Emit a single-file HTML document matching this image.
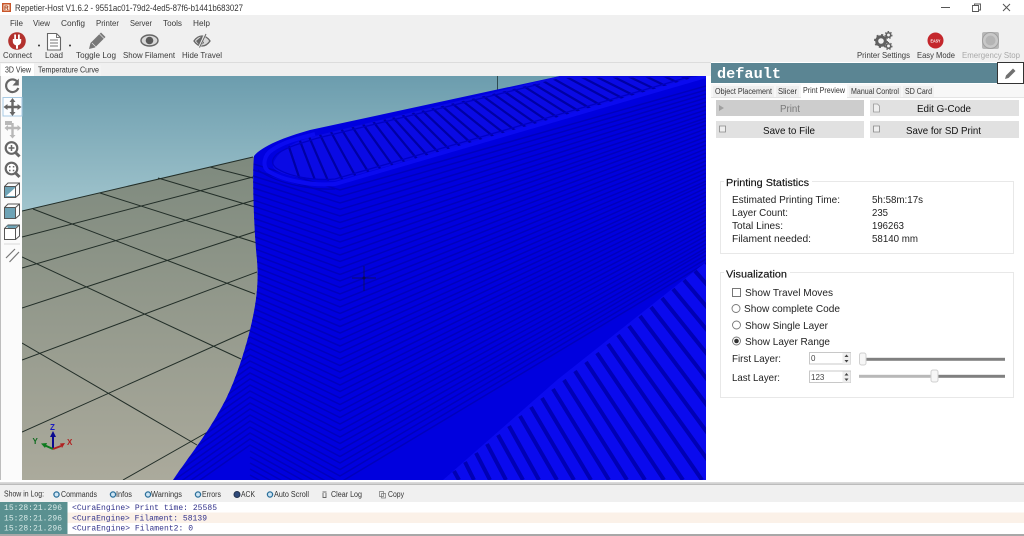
<!DOCTYPE html>
<html><head><meta charset="utf-8"><title>Repetier-Host</title>
<style>
html,body{margin:0;padding:0;background:#f0f0f0;width:1024px;height:536px;overflow:hidden}
svg{display:block;filter:blur(.3px)}
text{font-family:"Liberation Sans",sans-serif;font-size:9px;fill:#333;white-space:pre}
.t{font-size:8.3px;fill:#3a3a3a}
.s{font-size:10.5px;fill:#222}
.l{font-size:8px;fill:#333}
.m{font-family:"Liberation Mono",monospace;font-size:8px}
.b{font-size:10.5px;fill:#111}
</style></head><body>
<svg width="1024" height="536" viewBox="0 0 1024 536" xmlns="http://www.w3.org/2000/svg">
<defs>
<linearGradient id="sky" x1="0" y1="0" x2="0" y2="1"><stop offset="0" stop-color="#6c9dae"/><stop offset="1" stop-color="#a3c6ce"/></linearGradient>
<linearGradient id="floor" x1="0" y1="0" x2="0" y2="1"><stop offset="0" stop-color="#7d897d"/><stop offset="1" stop-color="#abaa9c"/></linearGradient>
<clipPath id="view"><rect x="22" y="76" width="684" height="404"/></clipPath>
<clipPath id="body"><path d="M706 76L560 76L310 130C285 137 262 146 254 156C252 175 254 230 257 260C259 285 256 305 250 330C243 358 232 390 220 410C205 437 190 455 173 480L706 480Z"/></clipPath>
<clipPath id="bot"><path d="M443 480L557 380L706 262L706 480Z"/></clipPath>
<clipPath id="cav"><path d="M706 77L560 78L315 136C292 142 276 152 273 165C272 171 285 175 300 178L335 181Z"/></clipPath>
</defs>

<rect width="1024" height="536" fill="#f0f0f0"/>
<!-- title bar -->
<rect width="1024" height="15" fill="#fff"/>
<rect x="2" y="3" width="9" height="9" fill="#c8552a"/><rect x="3.5" y="4.5" width="6" height="6" fill="#fbe9d8"/><text x="4" y="10" style="font-size:6.5px;font-weight:bold;fill:#a53a16">R</text>
<text x="15" y="11" textLength="228" lengthAdjust="spacingAndGlyphs" style="font-size:8.8px">Repetier-Host V1.6.2 - 9551ac01-79d2-4ed5-87f6-b1441b683027</text>
<path d="M941 7.5h9" stroke="#555" fill="none"/>
<path d="M972.5 5.5h6v6h-6zM974.5 5.5v-1.5h6v6h-2" stroke="#555" fill="none" stroke-width=".9"/>
<path d="M1003 4l7 7M1010 4l-7 7" stroke="#555" fill="none"/>

<!-- menu -->
<text x="10" y="26" class="t" textLength="13" lengthAdjust="spacingAndGlyphs">File</text>
<text x="33" y="26" class="t" textLength="17" lengthAdjust="spacingAndGlyphs">View</text>
<text x="61" y="26" class="t" textLength="24" lengthAdjust="spacingAndGlyphs">Config</text>
<text x="96" y="26" class="t" textLength="23" lengthAdjust="spacingAndGlyphs">Printer</text>
<text x="130" y="26" class="t" textLength="22" lengthAdjust="spacingAndGlyphs">Server</text>
<text x="163" y="26" class="t" textLength="19" lengthAdjust="spacingAndGlyphs">Tools</text>
<text x="193" y="26" class="t" textLength="17" lengthAdjust="spacingAndGlyphs">Help</text>

<!-- toolbar icons -->
<circle cx="17" cy="41" r="8.8" fill="#b3322e"/>
<path d="M14.2 34.5h1.8v4.5h-1.8zM18 34.5h1.8v4.5H18zM12.8 39h8.4v2.3c0 2.4-1.7 3.7-3.2 4.1v3.4h-2v-3.4c-1.5-.4-3.2-1.7-3.2-4.1z" fill="#fff"/>
<circle cx="39" cy="45.5" r="1" fill="#333"/>
<path d="M47.5 33.5h9l4 4v12.5h-13z" fill="#fdfdfd" stroke="#666" stroke-width="1.1"/>
<path d="M56.5 33.5v4h4M50 40h8M50 43h8M50 46h8" stroke="#777" fill="none"/>
<circle cx="70" cy="45.5" r="1" fill="#333"/>
<path d="M89 49l1.5-6 10.5-10.5 4.5 4.5-10.5 10.5z" fill="#787878"/>
<path d="M92 43l4.5 4.5M99.5 34l4.5 4.5" stroke="#eee" stroke-width=".6"/>
<ellipse cx="149.500" cy="40.500" rx="8.500" ry="5.500" fill="#d8d8d8" stroke="#666" stroke-width="1.400"/>
<circle cx="149.500" cy="40.500" r="3.800" fill="#5a5a5a"/>
<path d="M194 41c2-3 5-5 8-5s6 2 8 5c-2 3-5 5-8 5s-6-2-8-5z" fill="#d8d8d8" stroke="#666" stroke-width="1.300"/>
<path d="M196 41l6-5 2 7-4 3z" fill="#666"/>
<path d="M206 33l-7 15" stroke="#f0f0f0" stroke-width="2.400"/>
<path d="M206 34l-6.500 13.500" stroke="#666" stroke-width="1"/>
<text x="3" y="58" class="t" textLength="29" lengthAdjust="spacingAndGlyphs">Connect</text>
<text x="45" y="58" class="t" textLength="18" lengthAdjust="spacingAndGlyphs">Load</text>
<text x="76" y="58" class="t" textLength="40" lengthAdjust="spacingAndGlyphs">Toggle Log</text>
<text x="123" y="58" class="t" textLength="52" lengthAdjust="spacingAndGlyphs">Show Filament</text>
<text x="182" y="58" class="t" textLength="40" lengthAdjust="spacingAndGlyphs">Hide Travel</text>

<!-- right toolbar -->
<circle cx="881" cy="41" r="4.300" fill="none" stroke="#606060" stroke-width="3"/>
<circle cx="881" cy="41" r="6" fill="none" stroke="#606060" stroke-width="2" stroke-dasharray="2 2.700"/>
<circle cx="888.500" cy="35" r="2.200" fill="none" stroke="#606060" stroke-width="1.500"/>
<circle cx="888.500" cy="35" r="3.400" fill="none" stroke="#606060" stroke-width="1.200" stroke-dasharray="1.500 1.500"/>
<circle cx="888.500" cy="46" r="2.200" fill="none" stroke="#606060" stroke-width="1.500"/>
<circle cx="888.500" cy="46" r="3.400" fill="none" stroke="#606060" stroke-width="1.200" stroke-dasharray="1.500 1.500"/>
<circle cx="935.500" cy="40.500" r="8" fill="#c4272c"/>
<text x="930.500" y="42.500" textLength="10" lengthAdjust="spacingAndGlyphs" style="font-size:4.500px;font-weight:bold;fill:#fff">EASY</text>
<rect x="982" y="32" width="17" height="17" rx="2" fill="#b8b8b8"/>
<circle cx="990.500" cy="40.500" r="8" fill="#c8c8c8" stroke="#a0a0a0"/>
<circle cx="990.500" cy="40.500" r="5" fill="#b4b4b4"/>
<text x="857" y="58" class="t" textLength="53" lengthAdjust="spacingAndGlyphs">Printer Settings</text>
<text x="917" y="58" class="t" textLength="38" lengthAdjust="spacingAndGlyphs">Easy Mode</text>
<text x="962" y="58" class="t" textLength="58" lengthAdjust="spacingAndGlyphs" style="fill:#a8a8a8">Emergency Stop</text>

<!-- left tabs -->
<rect x="0" y="62" width="711" height="1" fill="#dcdcdc"/>
<rect x="0" y="76" width="711" height="407" fill="#fff"/>
<rect x="1" y="63.500" width="33" height="13" fill="#fff"/>
<rect x="35" y="65" width="66" height="11" fill="#f3f3f3"/>
<text x="5" y="72.500" class="l" textLength="26" lengthAdjust="spacingAndGlyphs">3D View</text>
<text x="38" y="72.500" class="l" textLength="61" lengthAdjust="spacingAndGlyphs">Temperature Curve</text>

<!-- 3D view -->
<g clip-path="url(#view)">
<rect x="22" y="76" width="684" height="140" fill="url(#sky)"/>
<path d="M22 211L253 157L300 150V480H22Z" fill="url(#floor)"/>
<path d="M22 211L253 157M22 237L253 177M22 268L255 200M22 308L257 231M22 360L257 272M22 432L250 330M123 480L250 408M33 209L255 294M100 193L257 243M158 178L255 207M210 167L253 178M22 257L241 359M22 343L197 445" stroke="#222e28" stroke-width="1" fill="none"/>
<path d="M497.500 76V92" stroke="#2d4a50" stroke-width="1"/>
<g clip-path="url(#body)">
<rect x="170" y="76" width="540" height="410" fill="#0000de"/>
<path fill="none" stroke="#0000bc" stroke-width="1.500" d="M706 86L340 190L250 163M706 90L340 196.500L250 169M706 94L340 203L250 175M706 98L340 209.500L250 181M706 102L340 216L250 187M706 106L340 222.500L250 193M706 110L340 229L250 199M706 114L340 235.500L250 205M706 118L340 242L250 211M706 121L340 248.500L250 217M706 125L340 255L250 223M706 129L340 261.500L250 229M706 133L340 268L250 235M706 137L340 274.500L250 241M706 141L340 281L250 247M706 145L340 287.500L250 253M706 149L340 294L250 259M706 153L340 300.500L250 265L170 321M706 157L340 307L250 271L170 327M706 161L340 313.500L250 277L170 333M706 165L340 320L250 283L170 339M706 169L340 326.500L250 289L170 345M706 173L340 333L250 295L170 351M706 177L340 339.500L250 301L170 357M706 181L340 346L250 307L170 363M706 184L340 352.500L250 313L170 369M706 188L340 359L250 319L170 375M706 192L340 365.500L250 325L170 381M706 196L340 372L250 331L170 387M706 200L340 378.500L250 337L170 393M706 204L340 385L250 343L170 399M706 208L340 391.500L250 349L170 405M706 212L340 398L250 355L170 411M706 216L340 404.500L250 361L170 417M706 220L340 411L250 367L170 423M706 224L340 417.500L250 373L170 429M706 228L340 424L250 379L170 435M706 232L340 430.500L250 385L170 441M706 236L340 437L250 391L170 447M706 240L340 443.500L250 397L170 453M706 244L340 450L250 403L170 459M706 248L340 456.500L250 409L170 465M706 251L340 463L250 415L170 471M706 255L340 469.500L250 421L170 477M706 259L340 476L250 427L170 483M706 263L340 482.500L250 433L170 489M340 489L250 439L170 495M340 495L250 445L170 501M340 501L250 451M340 507L250 457M340 513L250 463M340 519L250 469M340 525L250 475M340 531L250 481"/>
<g clip-path="url(#bot)">
<rect x="440" y="260" width="270" height="222" fill="#0a0aee"/>
<path fill="none" stroke="#0000b4" stroke-width="4" d="M454 471L459 480M465 462L474 480M476 453L490 480M487 444L506 480M498 435L523 480M509 426L539 480M520 416L557 480M531 407L574 480M542 398L591 480M553 389L609 480M564 380L627 480M575 371L645 480M586 362L664 480M597 353L683 480M608 344L702 480M618 335L722 480M629 326L742 480M640 316L763 480M651 307L785 480M662 298L808 480M673 289L831 480M684 280L853 480M695 271L878 480M706 262L900 480"/>
</g>
<path d="M706 77L560 76L315 136C292 142 276 152 273 165C272 171 285 175 300 178L335 181Z" fill="#0a0ae4"/>
<g clip-path="url(#cav)">
<path fill="none" stroke="#0000a4" stroke-width="2.200" d="M300 180L260 60M315 180L269 60M329 183L276 60M343 181L283 60M356 177L291 60M369 173L298 60M381 170L308 60M393 166L317 60M405 163L326 60M417 159L335 60M428 156L341 60M439 153L350 60M450 150L360 60M461 147L369 60M472 144L379 60M483 141L388 60M494 137L398 60M505 134L410 60M516 131L421 60M527 128L433 60M538 125L445 60M549 122L458 60M560 119L469 60M571 116L482 60M582 113L494 60M593 110L507 60M604 107L520 60M615 103L535 60M626 100L549 60M637 97L563 60M648 94L580 60M659 91L594 60M670 88L612 60M681 84L629 60M692 81L646 60M703 78L664 60"/>
</g>
<path d="M706 76L335 184C310 186 282 180 268 171C262 166 264 155 272 150C285 141 300 138 315 134" fill="none" stroke="#0a0af0" stroke-width="4"/>
<path d="M706 72L335 179C312 181 288 176 276 168C270 163 272 157 280 152C292 145 305 142 318 138L540 84" fill="none" stroke="#0000c4" stroke-width="1.300"/>
<path d="M335 189C305 190 275 182 258 170" fill="none" stroke="#0000b8" stroke-width="1.300"/>
</g>
<path d="M364 266V291M352 278H376" stroke="#101040" stroke-width="1" opacity=".7"/>
<circle cx="364" cy="278" r="1.500" fill="#0a0a50"/>
<!-- axes -->
<path d="M53 449V436" stroke="#0a0a90" stroke-width="2"/><path d="M50 437L53 431L56 437Z" fill="#0a0a90"/>
<path d="M53 449L44 445" stroke="#0e7a1e" stroke-width="2"/><path d="M45 448L41 443.500L47 443Z" fill="#0e7a1e"/>
<path d="M53 449L61 446" stroke="#b02020" stroke-width="2"/><path d="M60 443.500L65 443L62 448Z" fill="#b02020"/>
<text x="50" y="430" style="font-size:8px;font-weight:bold;fill:#1a1ac0">Z</text>
<text x="32.500" y="444" style="font-size:8px;font-weight:bold;fill:#0e6a1e">Y</text>
<text x="67" y="445" style="font-size:8px;font-weight:bold;fill:#b02020">X</text>
</g>

<!-- left tool strip -->
<rect x="0" y="76" width="22" height="404" fill="#fbfbfb"/>
<rect x="0" y="76" width="1" height="407" fill="#bdbdbd"/>
<path d="M17.800 82.500A6.300 6.300 0 1 0 18.300 88" fill="none" stroke="#666" stroke-width="2.200"/>
<path d="M18.800 78.500V85.500H12.500Z" fill="#666"/>
<rect x="3" y="97.500" width="19" height="18.500" fill="#fbfdff" stroke="#a8cbe4"/>
<path d="M12.500 100V114M5.500 107H19.500" stroke="#666" stroke-width="2.400"/>
<path d="M12.500 98L9.500 102H15.500ZM12.500 116L9.500 112H15.500ZM3.500 107L7.500 104V110ZM21.500 107L17.500 104V110Z" fill="#666"/>
<path d="M12.500 123V137M6 128H19.500" stroke="#b8b8b8" stroke-width="2.400"/>
<path d="M12.500 138.500L9.500 135H15.500ZM4.500 128L8 125V131ZM21 128L17.500 125V131Z" fill="#b8b8b8"/>
<rect x="5" y="121" width="7" height="4" fill="#b8b8b8"/>
<circle cx="11.500" cy="148" r="5.800" fill="#fff" stroke="#666" stroke-width="2.200"/>
<path d="M15.500 152.500L19.500 156.500" stroke="#666" stroke-width="3"/>
<path d="M8.500 148H14.500M11.500 145V151" stroke="#666" stroke-width="1.500"/>
<circle cx="11.500" cy="168.500" r="5.800" fill="#fff" stroke="#666" stroke-width="2.200"/>
<path d="M15.500 173L19.500 177" stroke="#666" stroke-width="3"/>
<path d="M9 166h1.500v1.500H9zM12.800 166h1.500v1.500h-1.500zM9 169.800h1.500v1.500H9zM12.800 169.800h1.500v1.500h-1.500z" fill="#666"/>
<path d="M4.500 186.500h11v11h-11z" fill="#6ea3b6" stroke="#555"/>
<path d="M6 196L15 188V196Z" fill="#fff"/>
<path d="M4.500 186.500L8 183h11.500v11l-4 3.500M15.500 186.500l4-3.500" fill="none" stroke="#555"/>
<path d="M4.500 207.500h11v11h-11z" fill="#6ea3b6" stroke="#555"/>
<path d="M4.500 207.500L8 204h11.500v11l-4 3.500M15.500 207.500l4-3.500" fill="none" stroke="#555"/>
<path d="M4.500 228.500h11v11h-11z" fill="#fff" stroke="#555"/>
<path d="M4.500 228.500L8 225h11.500v11l-4 3.500M15.500 228.500l4-3.500" fill="none" stroke="#555"/>
<path d="M6 225.500h12L15 228H8z" fill="#6ea3b6"/>
<path d="M4 244H20" stroke="#d8d8d8"/>
<path d="M6 258L15 249M9.500 262L19 252" stroke="#777" stroke-width="1.200"/>

<!-- right panel -->
<rect x="711" y="62" width="313" height="421" fill="#fff"/>
<rect x="711" y="63" width="286" height="20" fill="#5b8593"/>
<text x="717" y="78" textLength="64" lengthAdjust="spacingAndGlyphs" style="font-family:'Liberation Mono',monospace;font-size:15px;font-weight:bold;fill:#fff">default</text>
<rect x="997.500" y="62.500" width="26" height="21" fill="#fff" stroke="#333"/>
<path d="M1005 79l1-3.500 7-7 2.500 2.500-7 7z" fill="#707070"/>
<rect x="711" y="84" width="313" height="13" fill="#f7f7f7"/>
<rect x="713" y="86" width="61" height="11" fill="#efefef"/><rect x="776" y="86" width="23" height="11" fill="#efefef"/><rect x="849" y="86" width="52" height="11" fill="#efefef"/><rect x="903" y="86" width="31" height="11" fill="#efefef"/>
<rect x="801" y="84.500" width="46" height="13" fill="#fff"/>
<rect x="711" y="97" width="90" height="1" fill="#e4e4e4"/><rect x="847" y="97" width="177" height="1" fill="#e4e4e4"/>
<text x="715" y="94" class="l" textLength="57" lengthAdjust="spacingAndGlyphs">Object Placement</text>
<text x="778" y="94" class="l" textLength="19" lengthAdjust="spacingAndGlyphs">Slicer</text>
<text x="803" y="93" class="l" textLength="42" lengthAdjust="spacingAndGlyphs">Print Preview</text>
<text x="851" y="94" class="l" textLength="48" lengthAdjust="spacingAndGlyphs">Manual Control</text>
<text x="905" y="94" class="l" textLength="27" lengthAdjust="spacingAndGlyphs">SD Card</text>

<rect x="716" y="100" width="148" height="16" fill="#cdcdcd"/>
<rect x="870" y="100" width="149" height="16" fill="#e1e1e1"/>
<rect x="716" y="121" width="148" height="17" fill="#e1e1e1"/>
<rect x="870" y="121" width="149" height="17" fill="#e1e1e1"/>
<path d="M719 105l5 3-5 3z" fill="#a0a0a0"/>
<path d="M873.500 104h4l2 2v6h-6z" fill="#eee" stroke="#999" stroke-width=".8"/>
<path d="M719.500 126h6v6h-6z" fill="#eee" stroke="#888" stroke-width=".8"/>
<path d="M873.500 126h6v6h-6z" fill="#eee" stroke="#888" stroke-width=".8"/>
<text x="780" y="112" class="b" textLength="20" lengthAdjust="spacingAndGlyphs" style="fill:#7a7a7a">Print</text>
<text x="917" y="112" class="b" textLength="54" lengthAdjust="spacingAndGlyphs">Edit G-Code</text>
<text x="763" y="134" class="b" textLength="52" lengthAdjust="spacingAndGlyphs">Save to File</text>
<text x="906" y="134" class="b" textLength="75" lengthAdjust="spacingAndGlyphs">Save for SD Print</text>

<!-- stats -->
<rect x="720.500" y="181.500" width="293" height="72" fill="none" stroke="#e8e8e8"/>
<rect x="724" y="176" width="88" height="10" fill="#fff"/>
<text x="726" y="186" class="s" textLength="83" lengthAdjust="spacingAndGlyphs" style="fill:#111;stroke:#111;stroke-width:.15">Printing Statistics</text>
<text x="732" y="203" class="s" textLength="108" lengthAdjust="spacingAndGlyphs">Estimated Printing Time:</text>
<text x="732" y="216" class="s" textLength="56" lengthAdjust="spacingAndGlyphs">Layer Count:</text>
<text x="732" y="229" class="s" textLength="51" lengthAdjust="spacingAndGlyphs">Total Lines:</text>
<text x="732" y="242" class="s" textLength="79" lengthAdjust="spacingAndGlyphs">Filament needed:</text>
<text x="872" y="203" class="s" textLength="51" lengthAdjust="spacingAndGlyphs">5h:58m:17s</text>
<text x="872" y="216" class="s" textLength="16" lengthAdjust="spacingAndGlyphs">235</text>
<text x="872" y="229" class="s" textLength="32" lengthAdjust="spacingAndGlyphs">196263</text>
<text x="872" y="242" class="s" textLength="46" lengthAdjust="spacingAndGlyphs">58140 mm</text>

<!-- visualization -->
<rect x="720.500" y="272.500" width="293" height="125" fill="none" stroke="#e8e8e8"/>
<rect x="724" y="268" width="66" height="10" fill="#fff"/>
<text x="726" y="277.500" class="s" textLength="61" lengthAdjust="spacingAndGlyphs" style="fill:#111;stroke:#111;stroke-width:.15">Visualization</text>
<rect x="732.500" y="288.500" width="8" height="8" fill="#fff" stroke="#777"/>
<text x="745" y="296" class="s" textLength="88" lengthAdjust="spacingAndGlyphs">Show Travel Moves</text>
<circle cx="736" cy="308.500" r="4" fill="#fff" stroke="#777" stroke-width=".9"/>
<text x="744" y="312" class="s" textLength="96" lengthAdjust="spacingAndGlyphs">Show complete Code</text>
<circle cx="736.500" cy="325" r="4" fill="#fff" stroke="#777" stroke-width=".9"/>
<text x="745" y="329" class="s" textLength="83" lengthAdjust="spacingAndGlyphs">Show Single Layer</text>
<circle cx="736.500" cy="341" r="4" fill="#fff" stroke="#777" stroke-width=".9"/>
<circle cx="736.500" cy="341" r="2.300" fill="#333"/>
<text x="745" y="345" class="s" textLength="85" lengthAdjust="spacingAndGlyphs">Show Layer Range</text>
<text x="732" y="362" class="s" textLength="49" lengthAdjust="spacingAndGlyphs">First Layer:</text>
<text x="732" y="381" class="s" textLength="48" lengthAdjust="spacingAndGlyphs">Last Layer:</text>
<rect x="809.500" y="352.500" width="41" height="11.500" fill="#fff" stroke="#c8c8c8"/>
<rect x="809.500" y="371" width="41" height="11.500" fill="#fff" stroke="#c8c8c8"/>
<rect x="842.500" y="353" width="8" height="11" fill="#eee"/>
<rect x="842.500" y="371.500" width="8" height="11" fill="#eee"/>
<path d="M844.500 357l2-2.500 2 2.500zM844.500 360l2 2.500 2-2.500zM844.500 375.500l2-2.500 2 2.500zM844.500 378.500l2 2.500 2-2.500z" fill="#444"/>
<text x="811" y="361" style="font-size:8px;fill:#444">0</text>
<text x="811" y="380" style="font-size:8px;fill:#444">123</text>
<rect x="860" y="357.800" width="145" height="3" fill="#808080"/>
<rect x="859" y="374.800" width="74" height="3" fill="#b8b8b8"/>
<rect x="933" y="374.800" width="72" height="3" fill="#808080"/>
<rect x="859.500" y="353" width="6.500" height="12" rx="2" fill="#f6f6f6" stroke="#d0d0d0"/>
<rect x="931" y="370" width="7" height="12" rx="2" fill="#f6f6f6" stroke="#d0d0d0"/>

<!-- log -->
<rect x="0" y="480" width="1024" height="3" fill="#fff"/>
<rect x="0" y="482.500" width="1024" height="1" fill="#b4b4b4"/>
<rect x="0" y="484" width="1024" height="1" fill="#bcbcbc"/>
<rect x="0" y="485" width="1024" height="17" fill="#f0f0f0"/>
<text x="4" y="496.500" class="l" textLength="40" lengthAdjust="spacingAndGlyphs">Show in Log:</text>
<g fill="#cfe6f5" stroke="#2a6f9a" stroke-width="1.300">
<circle cx="56.500" cy="494.500" r="2.600"/><circle cx="113" cy="494.500" r="2.600"/><circle cx="148" cy="494.500" r="2.600"/><circle cx="198" cy="494.500" r="2.600"/><circle cx="270" cy="494.500" r="2.600"/>
</g>
<circle cx="237" cy="494.500" r="3" fill="#2f4a7a" stroke="#24344f"/>
<text x="61" y="497" class="l" textLength="36" lengthAdjust="spacingAndGlyphs">Commands</text>
<text x="116" y="497" class="l" textLength="16" lengthAdjust="spacingAndGlyphs">Infos</text>
<text x="151" y="497" class="l" textLength="31" lengthAdjust="spacingAndGlyphs">Warnings</text>
<text x="202" y="497" class="l" textLength="19" lengthAdjust="spacingAndGlyphs">Errors</text>
<text x="241" y="497" class="l" textLength="14" lengthAdjust="spacingAndGlyphs">ACK</text>
<text x="274" y="497" class="l" textLength="35" lengthAdjust="spacingAndGlyphs">Auto Scroll</text>
<path d="M322.500 492h4M323 493v4.500h3v-4.500" fill="none" stroke="#666" stroke-width=".9"/>
<text x="331" y="497" class="l" textLength="31" lengthAdjust="spacingAndGlyphs">Clear Log</text>
<path d="M379.500 491.500h4v5h-4zM381.500 493.500h4v4.500h-4z" fill="none" stroke="#777" stroke-width=".7"/>
<text x="388" y="497" class="l" textLength="16" lengthAdjust="spacingAndGlyphs">Copy</text>
<rect x="0" y="502" width="1024" height="10.500" fill="#fff"/>
<rect x="0" y="512.500" width="1024" height="10.500" fill="#fbf1e8"/>
<rect x="0" y="523" width="1024" height="11" fill="#fff"/>
<rect x="0" y="502" width="67.500" height="32" fill="#5a9090"/>
<text x="4" y="510" class="m" style="fill:#d6e8e6" textLength="58">15:28:21.296</text>
<text x="4" y="520.500" class="m" style="fill:#d6e8e6" textLength="58">15:28:21.296</text>
<text x="4" y="530.500" class="m" style="fill:#d6e8e6" textLength="58">15:28:21.296</text>
<text x="72" y="510" class="m" style="fill:#33338c" textLength="145">&lt;CuraEngine&gt; Print time: 25585</text>
<text x="72" y="520.500" class="m" style="fill:#33338c" textLength="135">&lt;CuraEngine&gt; Filament: 58139</text>
<text x="72" y="530.500" class="m" style="fill:#33338c" textLength="121">&lt;CuraEngine&gt; Filament2: 0</text>
<rect x="0" y="534" width="1024" height="2" fill="#a8a8a8"/>
</svg>
</body></html>
